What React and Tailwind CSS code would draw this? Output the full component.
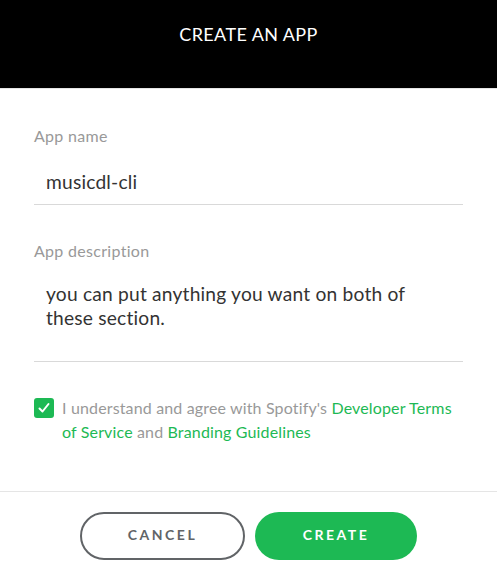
import React from "react";

export default function App() {
  return (
    <div className="w-[497px] h-[576px] bg-white flex flex-col" style={{ fontFamily: "Lato, 'Noto Sans', sans-serif" }}>
      <div className="h-[89px] shrink-0 bg-black flex justify-center pt-[22px] border-b border-[#e5e5e5]">
        <h1 className="text-white text-[18px] leading-[24px] tracking-[0.4px]">CREATE AN APP</h1>
      </div>
      <div className="px-[34px] pt-[37px] flex flex-col">
        <label className="text-[#999] text-[16px] leading-[20px] tracking-[0.3px]">App name</label>
        <div className="mt-[24px] pl-[12px] text-[#333] text-[19.2px] leading-[24px] tracking-[0.2px] pb-[10px] border-b border-[#d9d9d9]">musicdl-cli</div>
        <label className="mt-[36px] text-[#999] text-[16px] leading-[20px] tracking-[0.3px]">App description</label>
        <div className="mt-[21px] pl-[12px] text-[#333] text-[19.2px] leading-[24px] tracking-[0.2px] h-[80px] border-b border-[#d9d9d9]">
          you can put anything you want on both of<br />these section.
        </div>
        <div className="mt-[36px] flex items-start gap-[8px]">
          <div className="w-[20px] h-[20px] rounded-[3px] bg-[#1db954] flex items-center justify-center shrink-0">
            <svg width="14" height="14" viewBox="0 0 14 14" fill="none">
              <path d="M2.5 7.5 L5.5 10.5 L11.5 3" stroke="white" strokeWidth="2" strokeLinecap="round" strokeLinejoin="round" />
            </svg>
          </div>
          <p className="text-[#999] text-[16px] leading-[24px] tracking-[0.15px] -mt-[2px] whitespace-nowrap">
            I understand and agree with Spotify's <span className="text-[#1db954]">Developer Terms</span>
            <br />
            <span className="text-[#1db954]">of Service</span> and <span className="text-[#1db954]">Branding Guidelines</span>
          </p>
        </div>
      </div>
      <div className="mt-auto border-t border-[#e5e5e5] h-[85px] flex justify-center items-start pt-[20px] gap-[10px]">
        <button className="w-[165px] h-[48px] pb-[3px] rounded-full border-2 border-[#616467] text-[#616467] text-[14px] font-bold tracking-[2.5px]">CANCEL</button>
        <button className="w-[162px] h-[48px] pb-[3px] rounded-full bg-[#1db954] text-white text-[14px] font-bold tracking-[2.5px]">CREATE</button>
      </div>
    </div>
  );
}
